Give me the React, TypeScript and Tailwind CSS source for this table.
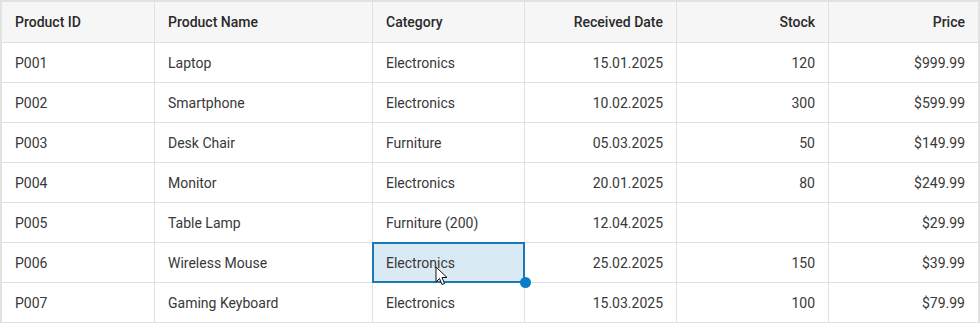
import React from "react";

type Product = {
  id: string;
  name: string;
  category: string;
  received: string;
  stock: string;
  price: string;
};

const products: Product[] = [
  { id: "P001", name: "Laptop", category: "Electronics", received: "15.01.2025", stock: "120", price: "$999.99" },
  { id: "P002", name: "Smartphone", category: "Electronics", received: "10.02.2025", stock: "300", price: "$599.99" },
  { id: "P003", name: "Desk Chair", category: "Furniture", received: "05.03.2025", stock: "50", price: "$149.99" },
  { id: "P004", name: "Monitor", category: "Electronics", received: "20.01.2025", stock: "80", price: "$249.99" },
  { id: "P005", name: "Table Lamp", category: "Furniture (200)", received: "12.04.2025", stock: "", price: "$29.99" },
  { id: "P006", name: "Wireless Mouse", category: "Electronics", received: "25.02.2025", stock: "150", price: "$39.99" },
  { id: "P007", name: "Gaming Keyboard", category: "Electronics", received: "15.03.2025", stock: "100", price: "$79.99" },
];

const cols = "grid grid-cols-[153px_218px_152px_152px_152px_1fr]";

const Cursor = () => (
  <svg className="absolute left-[63px] top-[24px]" width="13" height="20" viewBox="0 0 13 20">
    <path d="M1 1 L1 16 L4.5 12.5 L7 18.5 L9.5 17.5 L7 11.5 L12 11.5 Z" fill="#fff" stroke="#111" strokeWidth="1" strokeLinejoin="round" />
  </svg>
);

export default function App() {
  return (
    <div className="w-[980px] h-[324px] bg-white overflow-hidden" style={{ fontFamily: "Roboto, 'Liberation Sans', sans-serif" }}>
      <div className="border-2 border-b-0 border-[#e2e2e2] text-[14px]">
        <div className={`${cols} h-[41px] bg-[#f6f6f6] border-b border-[#e0e0e0] font-medium text-[#2a2a2a]`}>
          <div className="px-[13px] flex items-center border-r border-[#e0e0e0]">Product ID</div>
          <div className="px-[13px] flex items-center border-r border-[#e0e0e0]">Product Name</div>
          <div className="px-[13px] flex items-center border-r border-[#e0e0e0]">Category</div>
          <div className="px-[13px] flex items-center justify-end border-r border-[#e0e0e0]">Received Date</div>
          <div className="px-[13px] flex items-center justify-end border-r border-[#e0e0e0]">Stock</div>
          <div className="px-[13px] flex items-center justify-end">Price</div>
        </div>
        {products.map((p) => {
          const selected = p.id === "P006";
          return (
            <div key={p.id} className={`${cols} h-10 border-b border-[#e0e0e0] text-[#383838]`}>
              <div className="px-[13px] pt-px flex items-center border-r border-[#e0e0e0]">{p.id}</div>
              <div className="px-[13px] pt-px flex items-center border-r border-[#e0e0e0]">{p.name}</div>
              {selected ? (
                <div className="relative -my-px -ml-px">
                  <div className="h-[41px] px-[12px] pt-px flex items-center bg-[#d9eaf5] border-2 border-[#1b7ab5]">{p.category}</div>
                  <Cursor />
                  <span className="absolute -right-[6px] -bottom-[5px] w-[11px] h-[11px] rounded-full bg-[#0b7cc7]" />
                </div>
              ) : (
                <div className="px-[13px] pt-px flex items-center border-r border-[#e0e0e0]">{p.category}</div>
              )}
              <div className="px-[13px] pt-px flex items-center justify-end border-r border-[#e0e0e0]">{p.received}</div>
              <div className="px-[13px] pt-px flex items-center justify-end border-r border-[#e0e0e0]">{p.stock}</div>
              <div className="px-[13px] pt-px flex items-center justify-end">{p.price}</div>
            </div>
          );
        })}
      </div>
    </div>
  );
}
